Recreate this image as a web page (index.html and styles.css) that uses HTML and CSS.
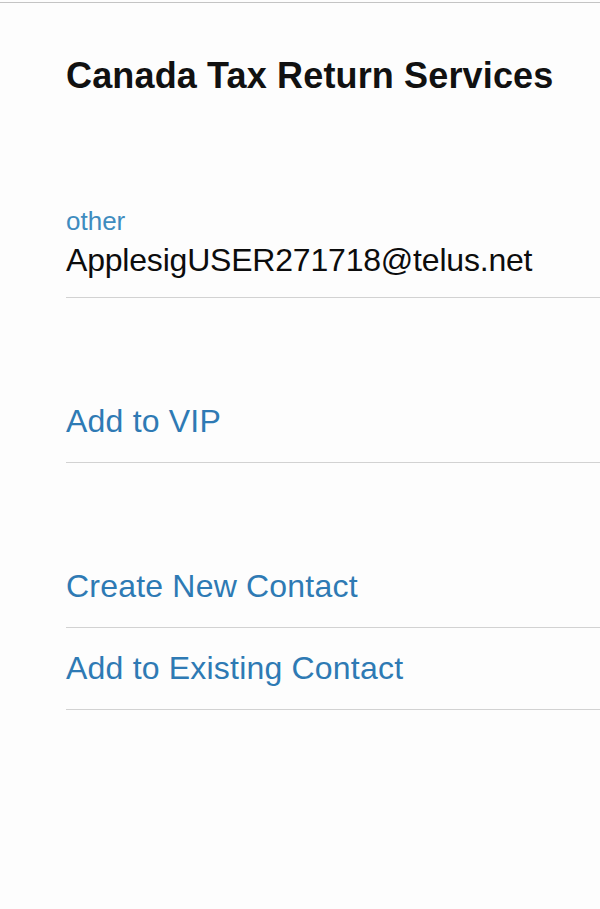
FILE: index.html
```html
<!DOCTYPE html>
<html lang="en">
<head>
<meta charset="utf-8">
<title>Contact</title>
<link rel="stylesheet" href="styles.css">
</head>
<body>
<div class="topline"></div>
<main class="sheet">
  <h1 class="title">Canada Tax Return Services</h1>
  <section class="group email-group">
    <div class="row email-row">
      <div class="label">other</div>
      <div class="value">ApplesigUSER271718@telus.net</div>
    </div>
  </section>
  <section class="group">
    <div class="row action">Add to VIP</div>
  </section>
  <section class="group">
    <div class="row action">Create New Contact</div>
    <div class="row action">Add to Existing Contact</div>
  </section>
</main>
</body>
</html>
```
FILE: styles.css
```css
html, body {
  margin: 0;
  padding: 0;
  background: #fdfdfd;
}
body {
  font-family: "Liberation Sans", Arial, sans-serif;
  color: #111;
  height: 909px;
  overflow: hidden;
}
.topline {
  margin-top: 2px;
  height: 1px;
  background: #c4c4c4;
}
.sheet {
  padding-left: 66px;
  padding-top: 51px;
}
.title {
  margin: 0;
  font-size: 36px;
  line-height: 44px;
  font-weight: 700;
  color: #111;
  letter-spacing: 0.15px;
}
.email-group {
  margin-top: 106px;
}
.row {
  border-bottom: 1px solid #d2d2d2;
}
.email-row {
  padding-bottom: 15px;
}
.label {
  font-size: 26px;
  line-height: 34px;
  color: #3f8cbf;
}
.value {
  font-size: 32px;
  line-height: 44px;
  color: #0c0c0c;
  letter-spacing: -0.2px;
}
.group + .group {
  margin-top: 83px;
}
.action {
  font-size: 32px;
  line-height: 81px;
  color: #2e7ab4;
  letter-spacing: 0.2px;
}
```
